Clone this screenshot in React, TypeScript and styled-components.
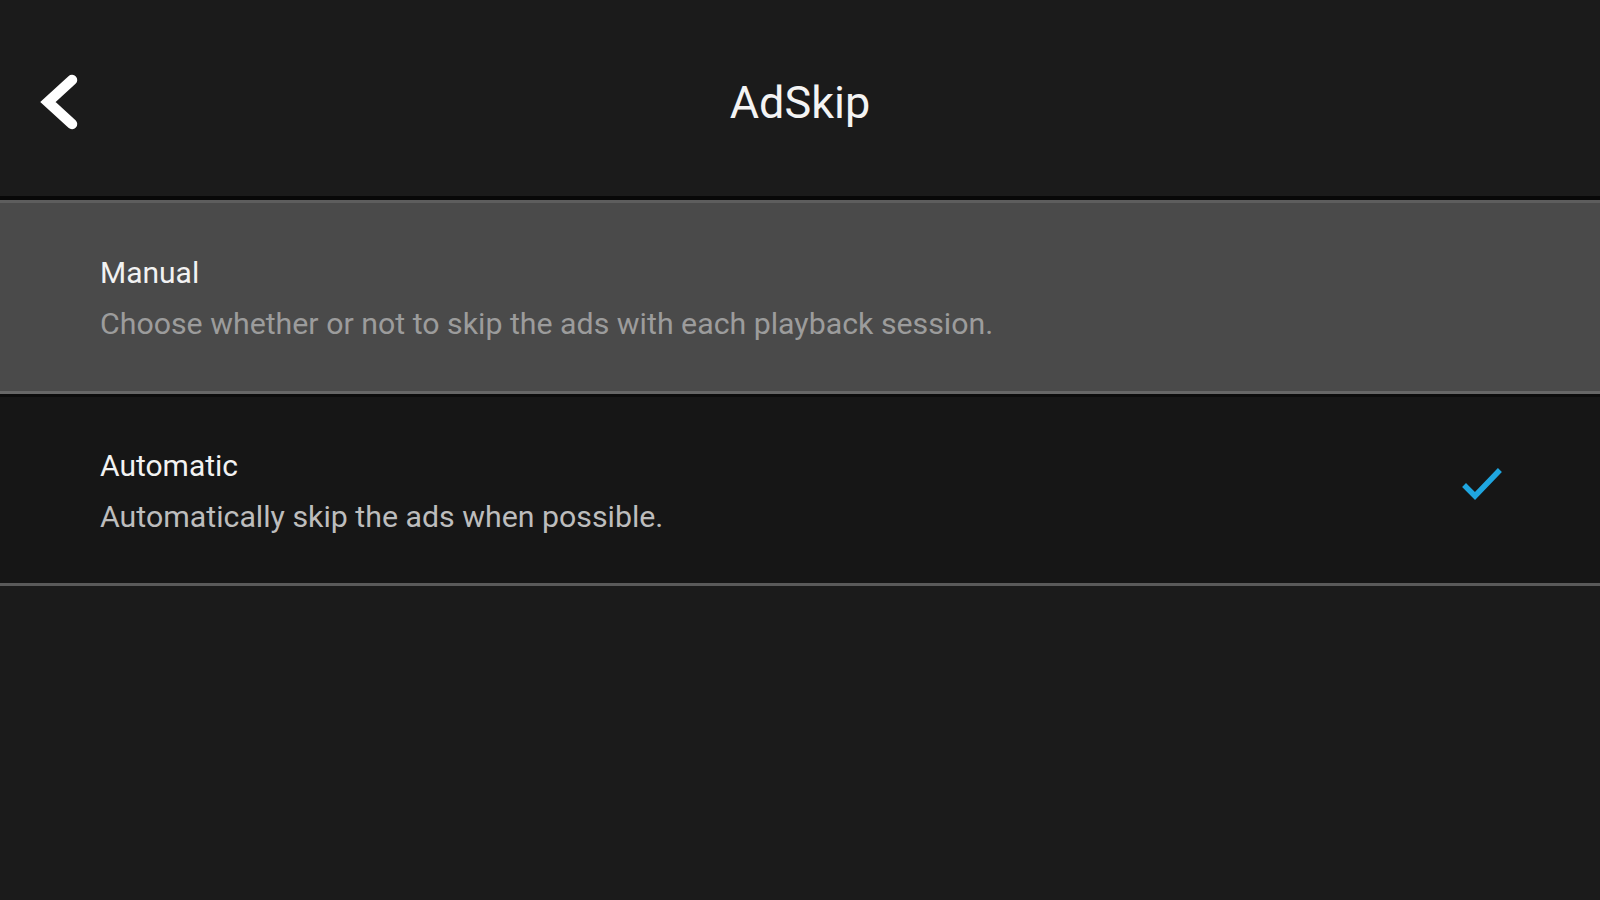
import React from "react";
import styled, { createGlobalStyle } from "styled-components";

const Global = createGlobalStyle`
  html, body { margin: 0; padding: 0; background: #1b1b1b; }
  body { font-family: Roboto, "Noto Sans", "Liberation Sans", sans-serif; }
  * { box-sizing: border-box; }
`;

const Screen = styled.div`
  width: 1600px;
  height: 900px;
  background: #1b1b1b;
  display: flex;
  flex-direction: column;
  overflow: hidden;
`;

const Header = styled.header`
  height: 200px;
  flex: none;
  display: grid;
  grid-template-columns: 120px 1fr 120px;
  align-items: center;
  background: #1b1b1b;
  border-bottom: 4px solid #080808;
`;

const BackButton = styled.button`
  width: 120px;
  height: 100%;
  background: none;
  border: none;
  padding: 8px 0 0 34px;
  display: flex;
  align-items: center;
  cursor: pointer;
`;

const Title = styled.h1`
  margin: 0;
  text-align: center;
  color: #f4f4f4;
  font-size: 45px;
  font-weight: 400;
  padding-top: 8px;
`;

const List = styled.div`
  display: flex;
  flex-direction: column;
`;

const Option = styled.div<{ $highlighted?: boolean }>`
  height: ${(p) => (p.$highlighted ? "194px" : "189px")};
  display: flex;
  align-items: center;
  justify-content: space-between;
  padding: 0 96px 0 100px;
  background: ${(p) => (p.$highlighted ? "#4a4a4a" : "#161616")};
  border-top: ${(p) => (p.$highlighted ? "3px solid #5d5d5d" : "none")};
  box-shadow: ${(p) => (p.$highlighted ? "0 3px 0 #0c0c0c" : "none")};
  border-bottom: 3px solid ${(p) => (p.$highlighted ? "#676767" : "#5a5a5a")};
  margin-bottom: ${(p) => (p.$highlighted ? "3px" : "0")};
`;

const Texts = styled.div`
  display: flex;
  flex-direction: column;
  gap: 15px;
  padding-top: 3px;
`;

const OptionTitle = styled.div`
  color: #f2f2f2;
  font-size: 30px;
  line-height: 36px;
  font-weight: 400;
`;

const OptionDesc = styled.div<{ $dim?: boolean }>`
  color: ${(p) => (p.$dim ? "#9c9c9c" : "#bdbdbd")};
  font-size: 30.3px;
  line-height: 36px;
`;

const CheckWrap = styled.div`
  display: flex;
  margin-top: -12px;
`;

const Check = () => (
  <svg width="44" height="40" viewBox="0 0 44 40" fill="none">
    <path
      d="M6 23 L15 32 L38 8"
      stroke="#1fa6e0"
      strokeWidth="5.5"
      strokeLinecap="square"
    />
  </svg>
);

const Chevron = () => (
  <svg width="48" height="60" viewBox="0 0 48 60" fill="none">
    <path
      d="M38 8 L14 30 L38 52"
      stroke="#ffffff"
      strokeWidth="10.5"
      strokeLinecap="round"
      strokeLinejoin="miter"
    />
  </svg>
);

export default function App() {
  return (
    <>
      <Global />
      <Screen>
        <Header>
          <BackButton aria-label="Back">
            <Chevron />
          </BackButton>
          <Title>AdSkip</Title>
          <div />
        </Header>
        <List>
          <Option $highlighted>
            <Texts>
              <OptionTitle>Manual</OptionTitle>
              <OptionDesc $dim>
                Choose whether or not to skip the ads with each playback session.
              </OptionDesc>
            </Texts>
          </Option>
          <Option>
            <Texts>
              <OptionTitle>Automatic</OptionTitle>
              <OptionDesc>Automatically skip the ads when possible.</OptionDesc>
            </Texts>
            <CheckWrap>
              <Check />
            </CheckWrap>
          </Option>
        </List>
      </Screen>
    </>
  );
}
